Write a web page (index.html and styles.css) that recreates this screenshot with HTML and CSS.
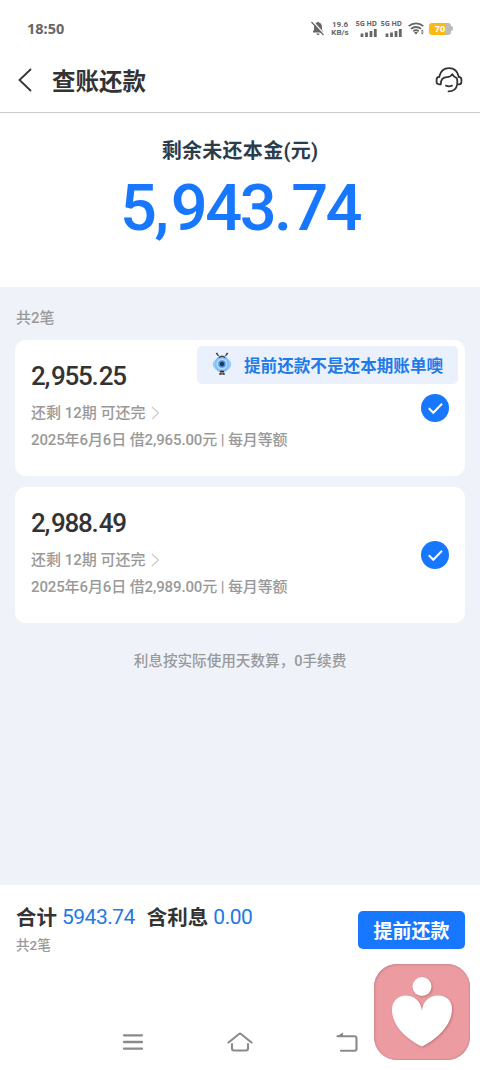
FILE: index.html
```html
<!DOCTYPE html>
<html lang="zh-CN">
<head>
<meta charset="utf-8">
<title>查账还款</title>
<link rel="stylesheet" href="styles.css">
</head>
<body>
<div class="screen">
  <div class="status">
    <span class="clock">18:50</span>
    <svg class="bell" width="14" height="15" viewBox="0 0 14 15"><path d="M2 11.500V10l1-1V6c0-2.500 1.500-4 3-4.400C6.200.6 7.800.6 8 1.600c1.700.4 3 2 3 4.400v3l1.200 1.200v1.300zM5.500 12.500h3a1.500 1.500 0 0 1-3 0z" fill="#666"/><path d="M2 .8 13.500 13.300" stroke="#fff" stroke-width="1.400"/><path d="M.5 1 12.500 14" stroke="#666" stroke-width="1.200"/></svg>
    <span class="speed"><span>19.6</span><span>KB/s</span></span>
    <span class="signal first"><span>5G HD</span><svg width="17" height="8" viewBox="0 0 17 8"><path d="M2 8V4.500M6.500 8V3.500M11 8V2M15.300 8V0" stroke="#666" stroke-width="2.800"/></svg></span>
    <span class="signal"><span>5G HD</span><svg width="17" height="8" viewBox="0 0 17 8"><path d="M2 8V4.500M6.500 8V3.500M11 8V2M15.300 8V0" stroke="#666" stroke-width="2.800"/></svg></span>
    <svg class="wifi" width="17" height="13" viewBox="0 0 17 13"><path d="M.7 4.200a11 11 0 0 1 14.600 0M3 6.900a7.500 7.500 0 0 1 10 0M5.300 9.300a4.200 4.200 0 0 1 5.400 0" fill="none" stroke="#666" stroke-width="1.800"/><path d="m6 10.500 2 2 2-2q-2-1.300-4 0zM12.800 9.500l1.500-2 1.500 2zM12.800 10.500l1.500 2 1.500-2z" fill="#666"/></svg>
    <span class="battery">70</span><i class="tip"></i>
  </div>
  <header class="nav">
    <svg class="back" width="14" height="24" viewBox="0 0 14 24"><path d="M13 1 1.500 12 13 23" fill="none" stroke="#333" stroke-width="1.800"/></svg>
    <h1>查账还款</h1>
    <svg class="service" width="28" height="26" viewBox="0 0 28 26"><g fill="none" stroke="#333" stroke-width="1.800" stroke-linecap="round" stroke-linejoin="round"><path d="M4.300 9.500C5.500 4.200 9.300 1.200 14 1.200s8.500 3 9.700 8.300"/><path d="M5.800 17.300H4Q1.600 17.300 1.600 15v-2.500Q1.600 10 4.300 9.800M5.800 17.300c0-5 2.700-7.200 6.200-7.200 2.500 0 4.200-1.200 5.300-3 .7 1.700 2.200 3.200 4.500 4 .6 2 .7 4 .4 6.200H24q2.400 0 2.400-2.300v-2.500q0-2.500-2.700-2.700M22.200 17.300c-.7 4.400-3.700 7-8.700 7.100M11 18.700q3 1.200 6 0"/></g></svg>
  </header>
  <section class="summary">
    <div class="label">剩余未还本金(元)</div>
    <div class="total">5<span class="comma">,</span>943<span class="dot">.</span>74</div>
  </section>
  <main class="list">
    <div class="count">共2笔</div>
    <article class="card">
      <div class="tag">
        <svg width="20" height="24" viewBox="0 0 20 24"><ellipse cx="10" cy="12.500" rx="9.300" ry="7" fill="#9accfb"/><ellipse cx="10" cy="12" rx="7" ry="9" fill="#80bdf8"/><circle cx="10" cy="12" r="5.500" fill="#b8dcff"/><circle cx="10" cy="12" r="3.800" fill="#4a8fe0"/><circle cx="10" cy="12" r="2.200" fill="#263754"/><path d="m6.500 4-2-3M13.500 4l2-3M4 2l1.500-1M16 2l-1.500-1M7 5.500q3-2 6 0" stroke="#333" stroke-width="1.200" fill="none"/><path d="M8 19h4v3H8z" fill="#d98f85"/><path d="M8 19.500h4M7.200 22h2.500M10.300 22h2.500" stroke="#26303b" stroke-width="1.500"/></svg>
        <span>提前还款不是还本期账单噢</span>
      </div>
      <div class="amount">2<span class="comma">,</span>955<span class="dot">.</span>25</div>
      <div class="line">还剩 12期 可还完<svg width="9" height="14" viewBox="0 0 9 14"><path d="m1 1 6.500 6L1 13" fill="none" stroke="#ccc" stroke-width="1.300"/></svg></div>
      <div class="line detail">2025年6月6日 借2,965.00元 | 每月等额</div>
      <svg class="check" width="28" height="28" viewBox="0 0 28 28"><circle cx="14" cy="14" r="14" fill="#1777ff"/><path d="m7.800 14.300 4.500 4.500 8.700-9" fill="none" stroke="#fff" stroke-width="2"/></svg>
    </article>
    <article class="card">
      <div class="amount">2<span class="comma">,</span>988<span class="dot">.</span>49</div>
      <div class="line">还剩 12期 可还完<svg width="9" height="14" viewBox="0 0 9 14"><path d="m1 1 6.500 6L1 13" fill="none" stroke="#ccc" stroke-width="1.300"/></svg></div>
      <div class="line detail">2025年6月6日 借2,989.00元 | 每月等额</div>
      <svg class="check" width="28" height="28" viewBox="0 0 28 28"><circle cx="14" cy="14" r="14" fill="#1777ff"/><path d="m7.800 14.300 4.500 4.500 8.700-9" fill="none" stroke="#fff" stroke-width="2"/></svg>
    </article>
    <p class="note">利息按实际使用天数算，0手续费</p>
  </main>
  <footer class="pay">
    <div class="sums">
      <div class="sumline"><b>合计</b><span class="blue">5943.74</span><b class="second">含利息</b><span class="blue">0.00</span></div>
      <div class="subcount">共2笔</div>
    </div>
    <button class="submit">提前还款</button>
  </footer>
  <nav class="keys">
    <svg width="22" height="18" viewBox="0 0 22 18"><path d="M2 2.300h18M2 9h18M2 15.700h18" stroke="#8a8a8a" stroke-width="2.300" stroke-linecap="round"/></svg>
    <svg width="26" height="20" viewBox="0 0 26 20"><path d="M1.500 10.500 12 2q1-.8 2 0l10.500 8.500M5 12v4.500Q5 18.500 7 18.500h12q2 0 2-2V12" fill="none" stroke="#8a8a8a" stroke-width="2.100" stroke-linecap="round" stroke-linejoin="round"/></svg>
    <svg width="22" height="20" viewBox="0 0 22 20"><path d="M1.500 4.200H18.500q2 0 2 2v10.500q0 2-2 2H5" fill="none" stroke="#8a8a8a" stroke-width="2.100" stroke-linecap="round"/><path d="M.3 4.500 7 .5v4.500z" fill="#8a8a8a"/></svg>
  </nav>
  <div class="float">
    <svg width="96" height="96" viewBox="0 0 96 96"><g class="figure" fill="#fff"><circle cx="48" cy="22.500" r="9.500"/><path d="M48 47C47 36 39 31.500 32 31.500 23 31.500 18 38 18 46 18 60 30 74 48 82.500 65 74 78 60 78 45 78 37 73 31.500 64 31.500 55 31.500 48.500 38 48 47z"/></g></svg>
  </div>
</div>
</body>
</html>
```

FILE: styles.css
```css
* { box-sizing: border-box; }
body { margin: 0; font-family: Roboto, "Noto Sans CJK SC", sans-serif; }
h1, p { margin: 0; }
svg { display: block; flex: none; }
.screen { position: relative; width: 480px; height: 1070px; background: #fff; display: flex; flex-direction: column; overflow: hidden; }
.status { height: 48px; flex: none; padding: 9px 20px 0 27px; display: flex; align-items: center; font-family: "Noto Sans", sans-serif; font-weight: 700; color: #666; }
.clock { font-size: 14.500px; width: 283px; flex: none; line-height: 18px; padding-bottom: 1px; }
.speed { display: flex; flex-direction: column; flex: none; width: 18px; margin-left: 6px; font: 700 8px/8px Roboto, sans-serif; text-align: center; white-space: nowrap; }
.signal { display: flex; flex-direction: column; align-items: flex-end; flex: none; width: 22px; margin-left: 3px; font-size: 7px; line-height: 8px; gap: 1px; white-space: nowrap; }
.signal.first { margin-left: 6px; }
.bell { margin-left: 1px; }
.wifi { margin-left: 6px; }
.battery { flex: none; margin-left: 4px; width: 22px; height: 12px; border-radius: 3px; background: linear-gradient(90deg, #fdb913 75%, #bbb 75%); color: #fff; font-size: 9px; line-height: 12px; text-align: center; }
.tip { flex: none; width: 2px; height: 5px; background: #bbb; border-radius: 0 2px 2px 0; }
.nav { height: 65px; flex: none; display: flex; align-items: center; padding: 0 17px 0 18px; border-bottom: 1px solid #ccc; }
.nav h1 { margin-left: 20px; flex: 1; padding-top: 3px; font-size: 23.500px; font-weight: 700; color: #333; line-height: 34px; }
.summary { height: 174px; flex: none; display: flex; flex-direction: column; align-items: center; padding-top: 24px; }
.label { font-size: 20px; line-height: 28px; font-weight: 700; color: #2b3d4c; letter-spacing: .3px; }
.total { font-size: 65px; line-height: 76px; margin-top: 5px; font-weight: 500; color: #1777ff; letter-spacing: -2.500px; }
.total .comma { letter-spacing: 1.800px; }
.total .dot { letter-spacing: -1px; }
.list { height: 598px; flex: none; background: #eff3f9; padding: 20px 15px 0; }
.count { height: 33px; line-height: 22px; font-size: 15px; font-weight: 500; color: #999; padding-left: 1px; }
.card { position: relative; height: 136px; margin-bottom: 11px; border-radius: 11px; background: #fff; padding: 20px 16px 0; }
.tag { position: absolute; top: 6px; right: 7px; width: 261px; height: 38px; border-radius: 5px; background: #eaf1fd; display: flex; align-items: center; padding: 0 0 2px 15px; gap: 12px; color: #207be8; font-size: 16.600px; font-weight: 700; white-space: nowrap; }
.tag span { padding-top: 2px; }
.amount { font-size: 26px; line-height: 32px; color: #333; font-weight: 500; letter-spacing: -1.300px; }
.amount .comma { letter-spacing: .8px; }
.amount .dot { letter-spacing: 0; }
.line { display: flex; align-items: center; height: 22px; margin-top: 10px; line-height: 22px; font-size: 15px; color: #999; font-weight: 500; white-space: pre; }
.line svg { margin-left: 5px; }
.line.detail { margin-top: 5px; letter-spacing: -.12px; }
.check { position: absolute; right: 16px; top: 54px; }
.note { margin-top: 27px; text-align: center; line-height: 22px; font-size: 14.600px; font-weight: 500; color: #999; }
.pay { height: 79px; flex: none; display: flex; justify-content: space-between; padding: 18px 15px 0 16px; }
.sumline { display: flex; align-items: center; height: 28px; line-height: 28px; font-size: 20.500px; color: #333; }
.sumline b { padding-top: 1px; }
.blue { color: #1f78e6; margin-left: 5px; font-size: 21px; letter-spacing: -.5px; }
.second { margin-left: 12px; }
.subcount { margin-top: 4px; line-height: 20px; font-size: 13.500px; color: #999; font-weight: 500; }
.submit { margin: 8px 0 0; width: 107px; height: 38px; border: 0; border-radius: 5px; padding: 0 0 1px; background: #1777ff; color: #fff; font: 700 19px Roboto, "Noto Sans CJK SC", sans-serif; }
.keys { display: flex; align-items: center; justify-content: space-between; height: 20px; margin-top: 68px; padding: 0 122px; }
.float { position: absolute; left: 374px; top: 964px; width: 96px; height: 96px; border-radius: 23px; background: #ec9ba1; box-shadow: inset 1px 1px 2px #c9858b, inset -1px -1px 1px #d99096; }
.figure { filter: drop-shadow(1px 1px 1px #bd747b); }
```
